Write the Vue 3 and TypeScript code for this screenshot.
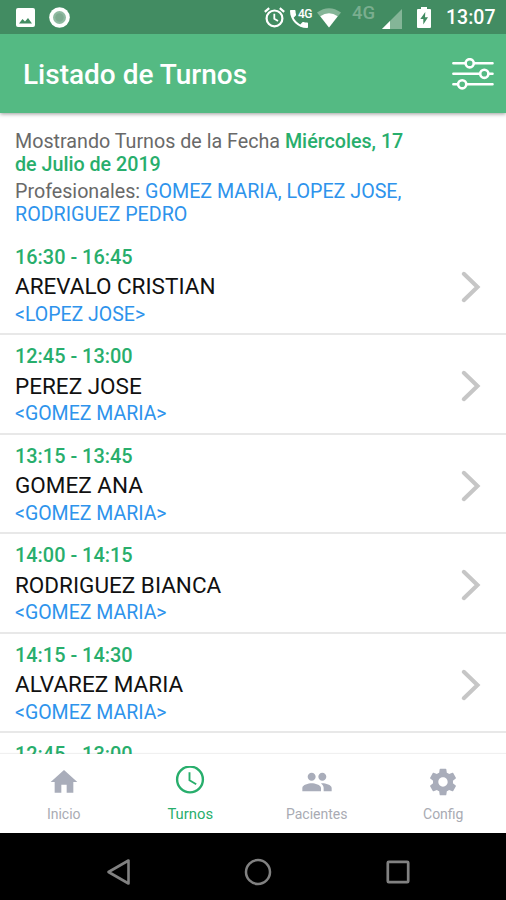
<script setup lang="ts">
interface Turno {
  hora: string
  paciente: string
  profesional: string
}

const turnos: Turno[] = [
  { hora: '16:30 - 16:45', paciente: 'AREVALO CRISTIAN', profesional: '<LOPEZ JOSE>' },
  { hora: '12:45 - 13:00', paciente: 'PEREZ JOSE', profesional: '<GOMEZ MARIA>' },
  { hora: '13:15 - 13:45', paciente: 'GOMEZ ANA', profesional: '<GOMEZ MARIA>' },
  { hora: '14:00 - 14:15', paciente: 'RODRIGUEZ BIANCA', profesional: '<GOMEZ MARIA>' },
  { hora: '14:15 - 14:30', paciente: 'ALVAREZ MARIA', profesional: '<GOMEZ MARIA>' },
  { hora: '12:45 - 13:00', paciente: '', profesional: '' },
]
</script>

<template>
  <div class="phone">
    <div class="status">
      <svg class="photo" width="19" height="19" viewBox="0 0 19 19">
        <rect width="19" height="19" rx="2" fill="#fff" />
        <path d="M3 15.500l3.500-4.500 2.500 2.500L12 10l4 5.500z" fill="#428c62" />
      </svg>
      <svg class="disc" width="21" height="21" viewBox="0 0 21 21">
        <circle cx="10.5" cy="10.5" r="10.3" fill="#fff" />
        <circle cx="10.5" cy="10.5" r="6.5" fill="#8fbaa1" />
        <circle cx="10.5" cy="10.5" r="4.2" fill="#7fab91" />
      </svg>
      <svg class="alarm" width="21" height="21" viewBox="0 0 21 21" fill="none" stroke="#fff" stroke-width="2.200">
        <circle cx="10.5" cy="11.4" r="7.9" />
        <path d="M.8 4.800L5.200 1.200M20.200 4.800L15.800 1.200" />
        <path d="M10.300 6.800v5l3.700 2.300" stroke-width="1.800" />
      </svg>
      <div class="call">
        <svg width="18" height="18" viewBox="3 3 18 18">
          <path d="M6.620 10.790c1.440 2.830 3.760 5.140 6.590 6.590l2.200-2.200c.27-.27.67-.36 1.020-.24 1.120.37 2.330.57 3.570.57.55 0 1 .45 1 1V20c0 .55-.45 1-1 1-9.390 0-17-7.610-17-17 0-.55.45-1 1-1h3.500c.55 0 1 .45 1 1 0 1.250.2 2.450.57 3.570.11.35.03.740-.25 1.020l-2.200 2.200z" fill="#fff" />
        </svg>
        <span>4G</span>
      </div>
      <svg class="wifi" width="24" height="20" viewBox="0 0 24 20">
        <path d="M0 4.500Q12-4 24 4.500L12 19.500z" fill="#84b597" />
        <path d="M3.300 8.300Q12 2 20.700 8.300L12 19.500z" fill="#fff" />
      </svg>
      <span class="net">4G</span>
      <svg class="signal" width="20" height="20" viewBox="0 0 20 20">
        <path d="M20 0v20H0z" fill="#84b597" />
        <path d="M8 12v8H0z" fill="#fff" />
      </svg>
      <svg class="battery" width="14" height="21" viewBox="0 0 14 21">
        <path d="M4 0h6v2h3q1 0 1 1v17q0 1-1 1H1q-1 0-1-1V3q0-1 1-1h3z" fill="#fff" />
        <path d="M8.300 5L3.300 12h3v5.500L11 10.300H8z" fill="#428c62" />
      </svg>
      <span class="clock">13:07</span>
    </div>

    <header class="toolbar">
      <h1>Listado de Turnos</h1>
      <svg width="42" height="32" viewBox="0 0 42 32" fill="none" stroke="#fff" stroke-width="2.600" stroke-linecap="round">
        <path d="M1.400 5.300H13M22 5.300H40.500M1.400 15.800H27.500M37 15.800H40.500M1.400 26.300H5.500M15 26.300H40.500" />
        <circle cx="17.700" cy="5.300" r="4.100" />
        <circle cx="32.300" cy="15.800" r="4.100" />
        <circle cx="10.200" cy="26.300" r="4.100" />
      </svg>
    </header>

    <main class="content">
      <section class="intro">
        <p>Mostrando Turnos de la Fecha <b>Miércoles, 17<br>de Julio de 2019</b></p>
        <p class="pros">Profesionales: <span>GOMEZ MARIA, LOPEZ JOSE,<br>RODRIGUEZ PEDRO</span></p>
      </section>
      <article v-for="(t, i) in turnos" :key="i" class="row">
        <div class="info">
          <div class="hora">{{ t.hora }}</div>
          <div class="paciente">{{ t.paciente }}</div>
          <div class="profesional">{{ t.profesional }}</div>
        </div>
        <svg width="22" height="34" viewBox="0 0 22 34">
          <path d="M3.800 3.800L17.500 17L3.800 30.200" fill="none" stroke="#c6c6c6" stroke-width="4.100" stroke-linecap="round" />
        </svg>
      </article>
    </main>

    <nav class="tabs">
      <a class="tab">
        <svg width="32" height="32" viewBox="0 0 24 24"><path d="M10 20v-6h4v6h5v-8h3L12 3 2 12h3v8z" fill="#a9adba" /></svg>
        <span>Inicio</span>
      </a>
      <a class="tab active">
        <svg width="32" height="32" viewBox="0 0 32 32" fill="none" stroke="#28ae6c">
          <circle cx="16" cy="13.500" r="12.900" stroke-width="2.400" />
          <path d="M15.500 6.300v8l6.700 4" stroke-width="1.900" />
        </svg>
        <span>Turnos</span>
      </a>
      <a class="tab">
        <svg width="34" height="32" viewBox="0 0 24 24"><path d="M16 11c1.660 0 2.990-1.340 2.990-3S17.660 5 16 5c-1.660 0-3 1.340-3 3s1.340 3 3 3zm-8 0c1.660 0 2.990-1.340 2.990-3S9.660 5 8 5C6.340 5 5 6.340 5 8s1.340 3 3 3zm0 2c-2.330 0-7 1.170-7 3.500V19h14v-2.500c0-2.330-4.670-3.500-7-3.500zm8 0c-.29 0-.62.020-.97.050 1.160.84 1.970 1.970 1.970 3.450V19h6v-2.500c0-2.330-4.670-3.500-7-3.500z" fill="#a9adba" /></svg>
        <span>Pacientes</span>
      </a>
      <a class="tab">
        <svg width="32" height="32" viewBox="0 0 24 24"><path d="M19.430 12.980c.04-.32.07-.64.07-.98s-.03-.66-.07-.98l2.110-1.650c.19-.15.24-.42.12-.64l-2-3.460c-.12-.22-.39-.3-.61-.22l-2.490 1c-.52-.4-1.080-.73-1.690-.98l-.38-2.650C14.460 2.180 14.250 2 14 2h-4c-.25 0-.46.18-.49.42l-.38 2.650c-.61.25-1.170.59-1.690.98l-2.490-1c-.23-.09-.49 0-.61.22l-2 3.460c-.13.22-.07.49.12.64l2.110 1.650c-.04.32-.07.65-.07.98s.03.66.07.98l-2.110 1.650c-.19.15-.24.42-.12.64l2 3.460c.12.22.39.3.61.22l2.490-1c.52.4 1.080.73 1.690.98l.38 2.650c.03.24.24.42.49.42h4c.25 0 .46-.18.49-.42l.38-2.650c.61-.25 1.170-.59 1.690-.98l2.490 1c.23.09.49 0 .61-.22l2-3.460c.12-.22.07-.49-.12-.64l-2.110-1.650zM12 15.500c-1.930 0-3.500-1.570-3.500-3.500s1.570-3.500 3.500-3.500 3.500 1.570 3.500 3.500-1.570 3.500-3.500 3.500z" fill="#a9adba" /></svg>
        <span>Config</span>
      </a>
    </nav>

    <footer class="keys">
      <svg class="back" width="26" height="28" viewBox="0 0 26 28"><path d="M22.500 2.500v23L2.500 14z" fill="none" stroke="#818181" stroke-width="2.600" stroke-linejoin="round" /></svg>
      <svg class="home" width="28" height="28" viewBox="0 0 28 28"><circle cx="14" cy="14" r="12" fill="none" stroke="#818181" stroke-width="2.500" /></svg>
      <svg class="recent" width="24" height="24" viewBox="0 0 24 24"><rect x="1.800" y="1.800" width="20.400" height="20.400" rx="1" fill="none" stroke="#818181" stroke-width="2.700" /></svg>
    </footer>
  </div>
</template>

<style>
body {
  margin: 0;
  overflow: hidden;
}
</style>

<style scoped>
.phone {
  width: 506px;
  height: 900px;
  display: flex;
  flex-direction: column;
  overflow: hidden;
  background: #fff;
  font-family: Roboto, "Liberation Sans", sans-serif;
}
svg {
  display: block;
  flex: none;
}
.status {
  flex: none;
  height: 34px;
  box-sizing: border-box;
  padding: 7px 0 0 16px;
  display: flex;
  align-items: flex-start;
  position: relative;
  z-index: 1;
  background: #428c62;
  color: #fff;
}
.photo { margin-top: 1px; }
.disc { margin-left: 14px; }
.alarm { margin-left: 194px; }
.call {
  display: flex;
  width: 24px;
  height: 21px;
  margin-left: 5px;
}
.call svg { margin-top: 3px; }
.call span {
  margin: 1px 0 0 -10px;
  font-size: 12px;
  line-height: 12px;
  font-weight: 500;
  letter-spacing: -0.5px;
}
.wifi { margin: 1px 0 0 3px; }
.net {
  width: 24px;
  margin: -4px 0 0 11px;
  font-size: 18.500px;
  line-height: 20px;
  font-weight: 500;
  color: #7aae8f;
}
.signal { margin: 2px 0 0 6px; }
.battery { margin-left: 15px; }
.clock {
  margin: 1px 0 0 15px;
  font-size: 19.500px;
  line-height: 20px;
  font-weight: 500;
}
.toolbar {
  flex: none;
  height: 79px;
  box-sizing: border-box;
  padding: 0 12px 0 23px;
  display: flex;
  align-items: center;
  justify-content: space-between;
  position: relative;
  background: #54ba83;
  color: #fff;
  box-shadow: 0 1px 4px rgba(0, 0, 0, 0.4);
}
h1 {
  margin: 3px 0 0;
  font-size: 28px;
  line-height: 36px;
  font-weight: 500;
}
.content {
  flex: 1;
  min-height: 0;
  overflow: hidden;
}
.intro {
  height: 105.500px;
  margin-top: 17px;
  padding-left: 15px;
  font-size: 19.700px;
  line-height: 23px;
  color: #696969;
  white-space: nowrap;
}
.intro p { margin: 0; }
.intro .pros { margin-top: 3.500px; }
.intro b { font-weight: 500; color: #28ae6c; }
.pros span { color: #2e93ec; }
.row {
  height: 99.500px;
  box-sizing: border-box;
  padding: 8px 24px 0 15px;
  display: flex;
  justify-content: space-between;
  border-bottom: 2px solid #e8e8e8;
}
.row svg { margin-top: 26px; }
.info { line-height: 28.500px; white-space: nowrap; }
.hora { font-size: 19.900px; font-weight: 500; color: #28ae6c; }
.paciente { height: 28.500px; font-size: 22.500px; color: #111; }
.profesional { font-size: 19.500px; color: #2e93ec; }
.tabs {
  flex: none;
  height: 79px;
  display: flex;
  position: relative;
  background: #fff;
  box-shadow: 0 -1px 1px rgba(0, 0, 0, 0.06);
}
.tab {
  flex: 1;
  display: flex;
  flex-direction: column;
  align-items: center;
  padding: 12px 0 0 1px;
  font-size: 14px;
  line-height: 18px;
  color: #a9abb3;
}
.tab span { margin-top: 7px; }
.active { color: #28ae6c; }
.active span { font-size: 14.800px; }
.keys {
  flex: none;
  height: 67px;
  display: flex;
  align-items: center;
  background: #000;
}
.keys svg { margin-top: 10px; }
.back { margin-left: 106px; }
.home { margin-left: 112px; }
.recent { margin-left: 114px; }
</style>
